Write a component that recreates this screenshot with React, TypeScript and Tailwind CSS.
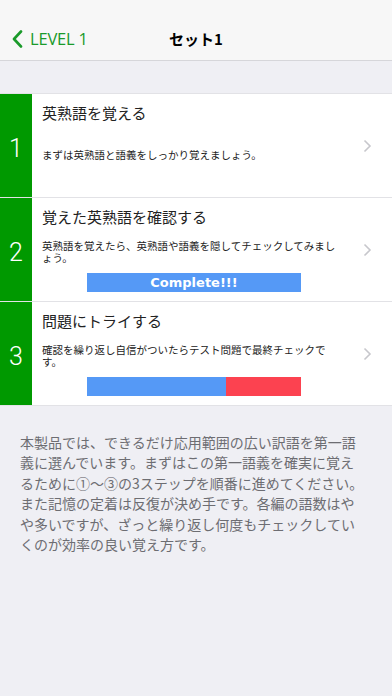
import React from 'react'

const jp = "font-['Noto_Sans_CJK_JP','Noto_Sans',sans-serif]"

function Chevron() {
  return (
    <svg width="9" height="14" viewBox="0 0 9 14" className="shrink-0">
      <path d="M1.5 1.5 L7 7 L1.5 12.5" fill="none" stroke="#c7c7cc" strokeWidth="1.6" />
    </svg>
  )
}

function StepRow({ n, title, desc, bar, subMt }: any) {
  return (
    <div className="flex h-[104px] bg-white border-b border-[#e2e2e6]">
      <div className="w-[32px] shrink-0 bg-[#009900] flex items-center justify-center pt-[5px]">
        <span className="text-white text-[25px] font-light font-['Roboto',sans-serif] leading-none">{n}</span>
      </div>
      <div className="flex-1 flex items-center pr-[20px]">
        <div className="flex-1 flex flex-col pl-[10px] pt-[9px] self-stretch">
          <div className={`${jp} text-[15px] leading-[20px] text-[#222]`}>{title}</div>
          <div className={`${jp} text-[10.5px] leading-[12px] text-[#222] w-[300px]`} style={{ marginTop: subMt }}>{desc}</div>
          {bar}
        </div>
        <Chevron />
      </div>
    </div>
  )
}

export default function App() {
  return (
    <div className="w-[392px] h-[696px] bg-[#efeff4] overflow-hidden">
      <div className="h-[61px] bg-[#f7f7f7] border-b border-[#d6d6da] relative flex items-end pb-[11px]">
        <div className="flex items-center pl-[12px] gap-[7px]">
          <svg width="11" height="18" viewBox="0 0 11 18">
            <path d="M9 1.5 L2 9 L9 16.5" fill="none" stroke="#1a9a2a" strokeWidth="2.6" strokeLinecap="round" strokeLinejoin="round" />
          </svg>
          <span className="text-[#1a9a2a] text-[16.5px] leading-[20px] font-['Open_Sans',sans-serif] tracking-[-0.2px]">LEVEL 1</span>
        </div>
        <div className={`absolute left-0 right-0 bottom-[11px] text-center ${jp} font-bold text-[15px] leading-[20px] text-black`}>セット1</div>
      </div>

      <div className="h-[32px]" />

      <div className="border-t border-[#e2e2e6]">
        <StepRow n="1" title="英熟語を覚える" desc="まずは英熟語と語義をしっかり覚えましょう。" subMt={26} />
        <StepRow
          n="2"
          title="覚えた英熟語を確認する"
          desc="英熟語を覚えたら、英熟語や語義を隠してチェックしてみましょう。"
          subMt={13}
          bar={
            <div className="mt-[9px] ml-[45px] w-[214px] h-[19px] bg-[#5599f6] flex items-center justify-center">
              <span className="text-white text-[13px] font-bold font-['DejaVu_Sans',sans-serif] leading-none">Complete!!!</span>
            </div>
          }
        />
        <StepRow
          n="3"
          title="問題にトライする"
          desc="確認を繰り返し自信がついたらテスト問題で最終チェックです。"
          subMt={13}
          bar={
            <div className="mt-[9px] ml-[45px] w-[214px] h-[19px] flex">
              <div className="w-[139px] bg-[#5599f6]" />
              <div className="flex-1 bg-[#fc4250]" />
            </div>
          }
        />
      </div>

      <p className={`${jp} text-[14px] leading-[20.4px] text-[#6d6d72] w-[346px] ml-[20px] mt-[26px]`}>
        本製品では、できるだけ応用範囲の広い訳語を第一語義に選んでいます。まずはこの第一語義を確実に覚えるために①〜③の3ステップを順番に進めてください。また記憶の定着は反復が決め手です。各編の語数はやや多いですが、ざっと繰り返し何度もチェックしていくのが効率の良い覚え方です。
      </p>
    </div>
  )
}
